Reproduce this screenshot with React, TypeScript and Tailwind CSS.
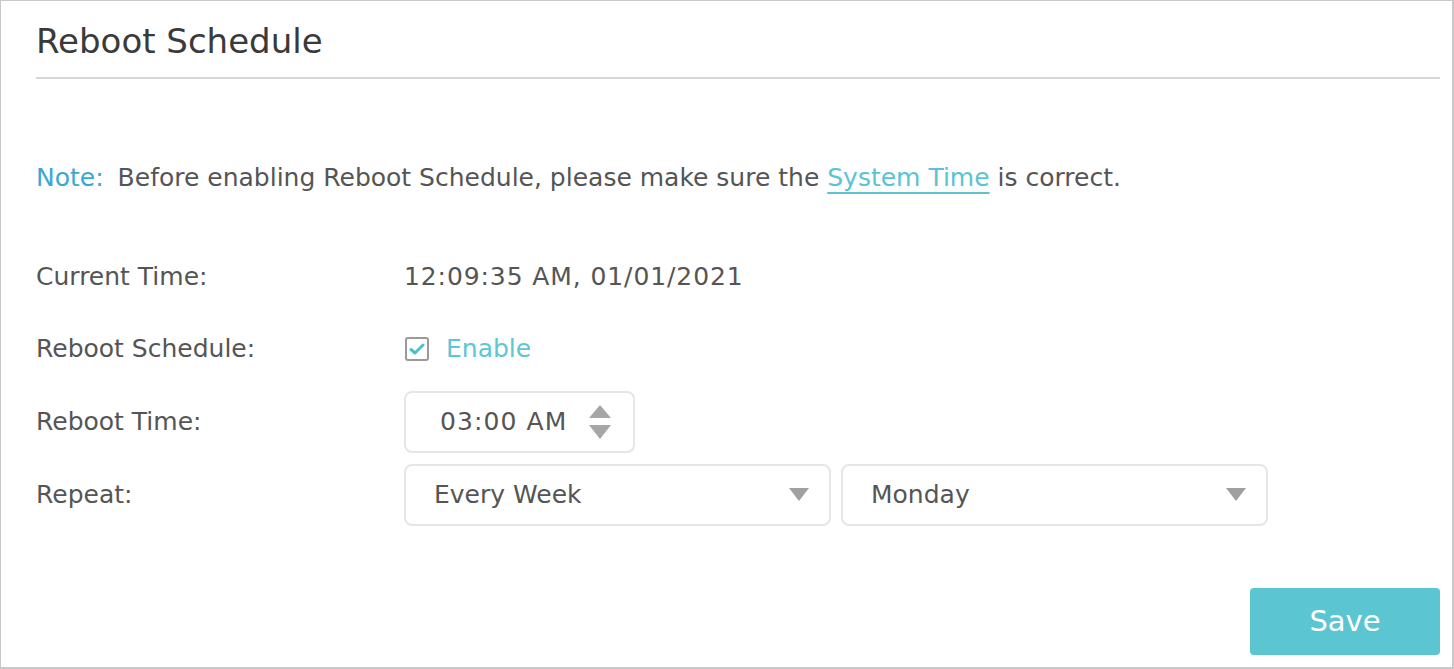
import React from "react";

const font = { fontFamily: '"DejaVu Sans", Verdana, sans-serif' };

function Row({ label, children }: { label: string; children: React.ReactNode }) {
  return (
    <div className="flex items-center">
      <div className="w-[368px] shrink-0 text-[25px] text-[#555]">{label}</div>
      <div className="flex items-center">{children}</div>
    </div>
  );
}

function Select({ value }: { value: string }) {
  return (
    <div className="w-[427px] h-[62px] border-2 border-[#e6e6e6] rounded-[8px] flex items-center justify-between pl-[28px] pr-[20px]">
      <span className="text-[25px] text-[#555]">{value}</span>
      <svg width="20" height="14" viewBox="0 0 20 14">
        <polygon points="0,0 20,0 10,13" fill="#a0a0a0" />
      </svg>
    </div>
  );
}

export default function App() {
  return (
    <div
      style={font}
      className="w-[1454px] h-[669px] bg-white border-t border-l border-r-2 border-b-2 border-[#c8c8c8] pl-[35px] pr-[12px] flex flex-col"
    >
      <div className="pt-[18px] pb-[14px] text-[34px] text-[#3a3a3a] leading-[44px] border-b-2 border-[#d6d6d6]">
        Reboot Schedule
      </div>
      <div className="mt-[84px] text-[25px] text-[#555] leading-[30px] whitespace-nowrap">
        <span className="text-[#3aa8d2]">Note:</span>
        <span className="ml-[14px]">Before enabling Reboot Schedule, please make sure the </span>
        <span className="text-[#5ac4d2] underline decoration-2 underline-offset-[6px] decoration-[#5ac4d2]">System Time</span>
        <span> is correct.</span>
      </div>
      <div className="mt-[48px] flex flex-col">
        <div className="h-[72px] flex items-center">
          <Row label="Current Time:">
            <span className="text-[25px] text-[#555] tracking-[0.9px]">12:09:35 AM, 01/01/2021</span>
          </Row>
        </div>
        <div className="h-[72px] flex items-center">
          <Row label="Reboot Schedule:">
            <div className="w-[24px] h-[24px] border-2 border-[#9a9a9a] rounded-[3px] flex items-center justify-center ml-[1px]">
              <svg width="16" height="14" viewBox="0 0 16 14">
                <path d="M2 7.5 L6 11 L14 3" stroke="#4cc0d0" strokeWidth="3" fill="none" strokeLinecap="round" strokeLinejoin="round" />
              </svg>
            </div>
            <span className="ml-[17px] text-[25px] text-[#5cc6d4]">Enable</span>
          </Row>
        </div>
        <div className="h-[74px] flex items-center">
          <Row label="Reboot Time:">
            <div className="w-[231px] h-[62px] border-2 border-[#e6e6e6] rounded-[8px] flex items-center pl-[34px] pr-[22px] justify-between">
              <span className="text-[25px] text-[#555] tracking-[1.1px]">03:00 AM</span>
              <svg width="22" height="38" viewBox="0 0 22 38">
                <polygon points="0,15 22,15 11,2" fill="#a6a6a6" />
                <polygon points="0,22 22,22 11,36" fill="#a6a6a6" />
              </svg>
            </div>
          </Row>
        </div>
        <div className="h-[72px] flex items-center">
          <Row label="Repeat:">
            <Select value="Every Week" />
            <div className="w-[10px]" />
            <Select value="Monday" />
          </Row>
        </div>
      </div>
      <div className="flex-1 flex items-end justify-end pb-[12px]">
        <button className="w-[190px] h-[67px] bg-[#5bc5d1] rounded-[4px] text-white text-[29px]">Save</button>
      </div>
    </div>
  );
}
